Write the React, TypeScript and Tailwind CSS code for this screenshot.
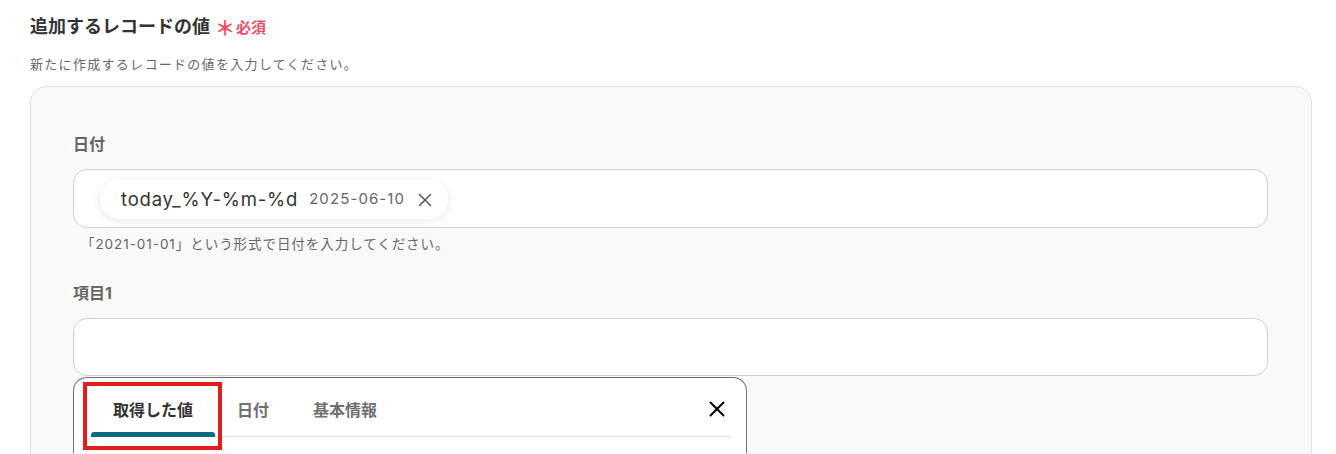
import React from "react";
import { X } from "lucide-react";

const font = { fontFamily: '"Inter", "Noto Sans CJK JP", sans-serif' };

function Chip() {
  return (
    <div className="mt-[2px] flex h-[39px] items-center rounded-full bg-white pl-[21px] pr-[12px] shadow-[0_2px_10px_rgba(0,0,0,0.09)]">
      <span className="text-[18.5px] tracking-[0.8px] text-[#333]">today_%Y-%m-%d</span>
      <span className="ml-[11px] text-[15px] tracking-[1.1px] text-[#666]">2025-06-10</span>
      <X className="ml-[9px] h-[22px] w-[22px] text-[#555]" strokeWidth={1.6} />
    </div>
  );
}

function Tabs() {
  const tabs = ["取得した値", "日付", "基本情報"];
  return (
    <div className="relative w-[674px] rounded-t-[14px] border border-b-0 border-[#707070] bg-white">
      <div className="mx-[14px] flex items-center border-b border-[#e3e3e3]">
        <div className="ml-[3px] flex">
          {tabs.map((t, i) => (
            <div
              key={t}
              className={`relative flex h-[58px] items-center px-[22px] pt-[6px] text-[16px] ${
                i === 0 ? "font-bold text-[#333]" : "font-semibold text-[#707070]"
              }`}
            >
              {t}
              {i === 0 && (
                <div className="absolute bottom-[-1px] left-0 right-0 h-[5px] rounded-t-[3px] bg-[#0b6b83]" />
              )}
            </div>
          ))}
        </div>
        <X className="ml-auto mr-[2px] mt-[4px] h-[26px] w-[26px] text-black" strokeWidth={1.8} />
      </div>
      <div className="h-[16px]" />
      <div className="pointer-events-none absolute left-[9px] top-[4px] h-[68px] w-[139px] border-4 border-[#e11d1d]" />
    </div>
  );
}

export default function App() {
  return (
    <div className="h-[454px] overflow-hidden bg-white pl-[30px] pt-[14px]" style={font}>
      <div className="flex items-center">
        <h2 className="text-[18px] font-bold leading-[26px] text-[#333]">追加するレコードの値</h2>
        <span className="ml-[5px] mt-[4px] text-[20px] font-bold leading-none text-[#ef4d64]">＊</span>
        <span className="ml-[1px] mt-[2px] text-[15px] font-bold text-[#ef4d64]">必須</span>
      </div>
      <p className="mt-[15px] text-[13px] leading-[18px] tracking-[0.1em] text-[#666]">
        新たに作成するレコードの値を入力してください。
      </p>
      <div className="mt-[13px] w-[1282px] rounded-[16px] border border-[#e3e4e6] bg-[#f9f9fa] pb-[20px] pl-[42px] pr-[43px] pt-[45px]">
        <div className="text-[16px] font-bold leading-[24px] text-[#666]">日付</div>
        <div className="mt-[13px] flex h-[59px] items-center rounded-[14px] border border-[#ccd1d9] bg-white pl-[26px]">
          <Chip />
        </div>
        <p className="mt-[7px] pl-[8px] text-[13.5px] leading-[18px] tracking-[0.07em] text-[#666]">
          「2021-01-01」という形式で日付を入力してください。
        </p>
        <div className="mt-[28px] text-[16px] font-bold leading-[24px] text-[#666]">項目1</div>
        <div className="mt-[13px] h-[58px] rounded-[14px] border border-[#ccd1d9] bg-white" />
        <div className="mt-[1px]">
          <Tabs />
        </div>
      </div>
    </div>
  );
}
